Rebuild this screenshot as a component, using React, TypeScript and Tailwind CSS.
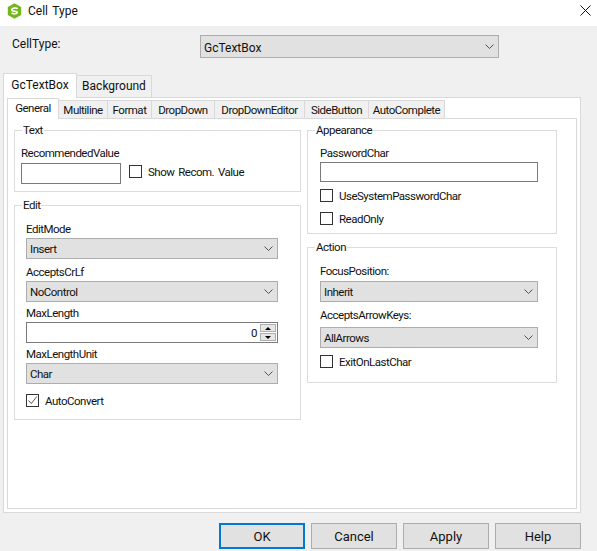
import { ReactNode } from "react";

const font = "font-['Roboto','Liberation_Sans',sans-serif]";

function Chevron() {
  return (
    <svg width="9" height="5" viewBox="0 0 9 5" className="shrink-0">
      <path d="M.5.5l4 4 4-4" fill="none" stroke="#505050" strokeWidth="1" />
    </svg>
  );
}

function Select({ value, className, big }: { value: string; className: string; big?: boolean }) {
  return (
    <div className={`flex items-center justify-between border border-[#adadad] bg-[#e1e1e1] pl-[3px] pr-[4px] ${big ? "text-[12px] tracking-normal" : ""} ${className}`}>
      <span className="pt-[3px]">{value}</span>
      <Chevron />
    </div>
  );
}

function FieldLabel({ children, className = "" }: { children: ReactNode; className?: string }) {
  return <div className={`h-4 leading-4 ${className}`}>{children}</div>;
}

function Check({ label, checked, className = "" }: { label: string; checked?: boolean; className?: string }) {
  return (
    <div className={`flex h-[13px] items-center gap-[6px] ${className}`}>
      <div className="flex size-[13px] shrink-0 items-center justify-center border border-[#333] bg-white">
        {checked && (
          <svg width="11" height="11" viewBox="0 0 11 11">
            <path d="M1.5 5.5l2.8 3 5.5-7" fill="none" stroke="#555" strokeWidth="1" />
          </svg>
        )}
      </div>
      <span className="pt-[3px]">{label}</span>
    </div>
  );
}

function Group({ title, className, children }: { title: string; className: string; children: ReactNode }) {
  return (
    <fieldset className={`border border-[#dcdcdc] ${className}`}>
      <legend className="ml-[7px] h-4 px-[1px] leading-4">{title}</legend>
      {children}
    </fieldset>
  );
}

function Spinner() {
  return (
    <div className="flex h-full w-[16px] flex-col gap-[1px] py-[1px]">
      <div className="flex flex-1 items-center justify-center border border-[#adadad] bg-[#e6e6e6]">
        <div className="size-0 border-x-[3px] border-b-[3px] border-x-transparent border-b-black" />
      </div>
      <div className="flex flex-1 items-center justify-center border border-[#adadad] bg-[#e6e6e6]">
        <div className="size-0 border-x-[3px] border-t-[3px] border-x-transparent border-t-black" />
      </div>
    </div>
  );
}

const innerTabs = [
  { name: "Multiline", w: "w-[49px]" },
  { name: "Format", w: "w-[44px]" },
  { name: "DropDown", w: "w-[63px]" },
  { name: "DropDownEditor", w: "w-[90px]" },
  { name: "SideButton", w: "w-[64px]" },
  { name: "AutoComplete", w: "w-[76px]" },
];

const buttons = ["OK", "Cancel", "Apply", "Help"];

export default function App() {
  return (
    <div className={`flex h-[551px] w-[597px] flex-col overflow-hidden bg-[#f0f0f0] text-[11.5px] tracking-[-0.5px] [word-spacing:1.5px] text-[#111] ${font}`}>
      <div className="flex h-[26px] shrink-0 items-start bg-white pl-[7px] pr-[7px] pt-[3px]">
        <svg width="15" height="16" viewBox="0 0 15 16" className="shrink-0">
          <path d="M7.5.3l6.7 3.8v7.8l-6.7 3.8L.8 11.9V4.1z" fill="#76b51b" />
          <path d="M10.6 5.6C9.4 4.700 5 4.700 4.700 6.800c-.2 2 5.800 .9 5.600 2.700-.2 1.700-4.300 1.500-5.800 .6" fill="none" stroke="#fff" strokeWidth="1.700" />
        </svg>
        <span className="ml-[6px] text-[12px] leading-4 tracking-normal">Cell Type</span>
        <svg width="11" height="11" viewBox="0 0 11 11" className="ml-auto mr-[-1px] mt-[2px]">
          <path d="M.5.5l10 10M10.500 .5l-10 10" stroke="#111" strokeWidth="1" />
        </svg>
      </div>

      <div className="mt-[9px] flex h-[23px] shrink-0 pl-[12px]">
        <div className="h-[18px] w-[188px] text-[12px] leading-[18px] tracking-normal">CellType:</div>
        <Select value="GcTextBox" big className="h-[23px] w-[299px]" />
      </div>

      <div className="ml-[3px] mt-[15px] w-[578px]">
        <div className="flex h-[24px] items-end text-[12px] tracking-normal">
          <div className="relative z-10 -mb-px flex h-[25px] w-[74px] items-center justify-center border border-b-0 border-[#d9d9d9] bg-white pb-[3px]">
            GcTextBox
          </div>
          <div className="flex h-[22px] w-[75px] items-center justify-center border border-b-0 border-l-0 border-[#d9d9d9] pb-[1px]">
            Background
          </div>
        </div>

        <div className="flex h-[416px] flex-col border border-[#d9d9d9] bg-white px-[3px] pb-[3px]">
          <div className="flex h-[20px] shrink-0 items-end">
            <div className="relative z-10 -mb-px flex h-[21px] w-[52px] items-center justify-center border border-b-0 border-[#d9d9d9] bg-white pb-[1px]">
              General
            </div>
            {innerTabs.map((t) => (
              <div key={t.name} className={`flex h-[18px] items-center justify-center border border-b-0 border-l-0 border-[#d9d9d9] bg-[#f0f0f0] pt-[2px] ${t.w}`}>
                {t.name}
              </div>
            ))}
          </div>

          <div className="flex flex-1 gap-[6px] border border-[#d9d9d9] bg-white pl-[6px] pt-[3px]">
            <div className="flex w-[287px] flex-col gap-[5px]">
              <Group title="Text" className="h-[70px]">
                <div className="px-[6px]">
                  <FieldLabel className="mt-[7px]">RecommendedValue</FieldLabel>
                  <div className="mt-[2px] flex items-start gap-[8px]">
                    <div className="h-[21px] w-[100px] border border-[#7a7a7a] bg-white" />
                    <Check label="Show Recom. Value" className="mt-[2px]" />
                  </div>
                </div>
              </Group>

              <Group title="Edit" className="h-[223px]">
                <div className="px-[11px]">
                  <FieldLabel className="mt-[8px]">EditMode</FieldLabel>
                  <Select value="Insert" className="mt-[1px] h-[21px] w-[252px]" />
                  <FieldLabel className="mt-[5px]">AcceptsCrLf</FieldLabel>
                  <Select value="NoControl" className="mt-[1px] h-[21px] w-[252px]" />
                  <FieldLabel className="mt-[3px]">MaxLength</FieldLabel>
                  <div className="mt-[1px] flex h-[21px] w-[252px] items-center justify-end border border-[#7a7a7a] bg-white pr-[1px]">
                    <span className="mr-[3px] pt-[3px]">0</span>
                    <Spinner />
                  </div>
                  <FieldLabel className="mt-[3px]">MaxLengthUnit</FieldLabel>
                  <Select value="Char" className="mt-[1px] h-[21px] w-[252px]" />
                  <Check label="AutoConvert" checked className="mt-[10px]" />
                </div>
              </Group>
            </div>

            <div className="flex w-[250px] flex-col gap-[5px]">
              <Group title="Appearance" className="h-[112px]">
                <div className="px-[12px]">
                  <FieldLabel className="mt-[7px]">PasswordChar</FieldLabel>
                  <div className="mt-[1px] h-[20px] w-[218px] border border-[#7a7a7a] bg-white" />
                  <Check label="UseSystemPasswordChar" className="mt-[7px]" />
                  <Check label="ReadOnly" className="mt-[10px]" />
                </div>
              </Group>

              <Group title="Action" className="h-[144px]">
                <div className="px-[12px]">
                  <FieldLabel className="mt-[8px]">FocusPosition:</FieldLabel>
                  <Select value="Inherit" className="mt-[2px] h-[21px] w-[218px]" />
                  <FieldLabel className="mt-[5px]">AcceptsArrowKeys:</FieldLabel>
                  <Select value="AllArrows" className="mt-[4px] h-[21px] w-[218px]" />
                  <Check label="ExitOnLastChar" className="mt-[7px]" />
                </div>
              </Group>
            </div>
          </div>
        </div>
      </div>

      <div className="ml-[219px] mt-[10px] flex gap-[6px] text-[13px] tracking-normal">
        {buttons.map((b) => (
          <button
            key={b}
            className={`h-[26px] w-[86px] bg-[#e1e1e1] pt-[1px] ${b === "OK" ? "border-2 border-[#0078d7]" : "border border-[#adadad]"}`}
          >
            {b}
          </button>
        ))}
      </div>
    </div>
  );
}
